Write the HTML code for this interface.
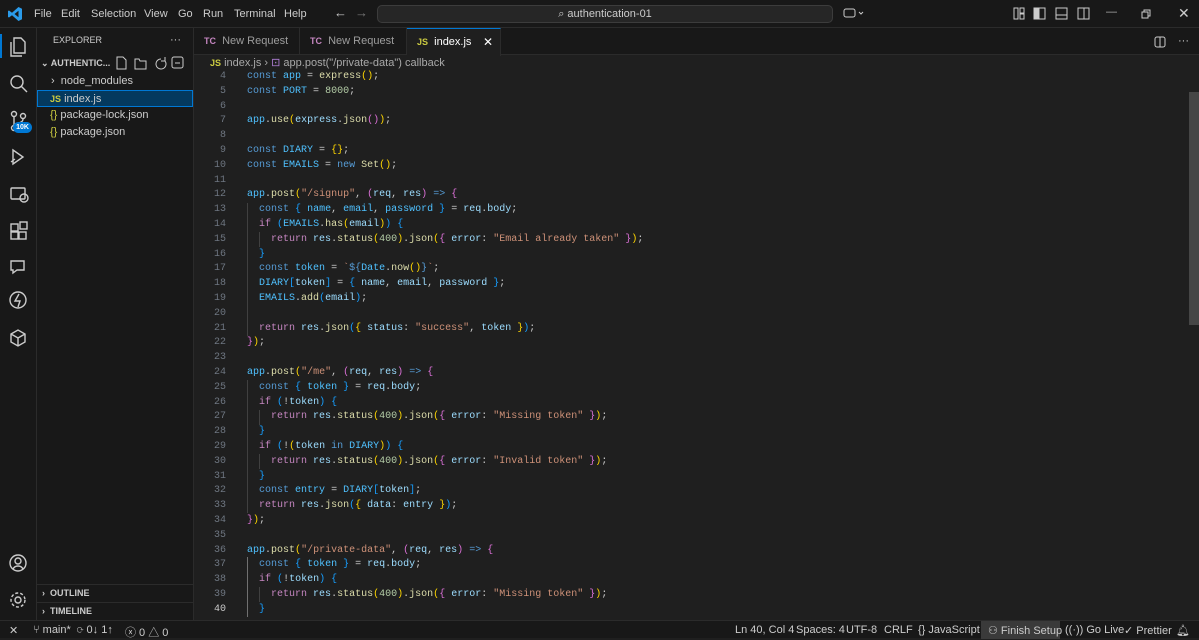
<!DOCTYPE html>
<html><head><meta charset="utf-8"><style>
*{margin:0;padding:0;box-sizing:border-box}
body{width:1199px;height:638px;background:#1f1f1f;font-family:"Liberation Sans",sans-serif;color:#ccc;position:relative;overflow:hidden;font-size:11px}
.abs{position:absolute}
#title{left:0;top:0;width:1199px;height:28px;background:#181818;border-bottom:1px solid #2b2b2b}
#title .m{top:8px;font-size:11px;color:#ccc}
#search{left:377px;top:5px;width:456px;height:18px;background:#262626;border:1px solid #3c3c3c;border-radius:5px;text-align:center;font-size:11px;color:#ccc;line-height:16px}
#act{left:0;top:28px;width:37px;height:592px;background:#181818;border-right:1px solid #2b2b2b}
#side{left:37px;top:28px;width:157px;height:592px;background:#181818;border-right:1px solid #2b2b2b}
#side .r{position:absolute;left:0;width:156px;height:17px;line-height:17px;font-size:11px;color:#ccc}
#tabs{left:194px;top:28px;width:1005px;height:27px;background:#181818;border-bottom:1px solid #2b2b2b}
.tab{position:absolute;top:0;height:27px;line-height:27px;font-size:11px;color:#9d9d9d;border-right:1px solid #2b2b2b;padding-left:10px}
#bc{left:194px;top:55px;height:16px;font-size:11px;color:#a9a9a9;line-height:16px}
#code{left:194px;top:70px;width:1000px;font-family:"Liberation Mono",monospace;font-size:10px}
.l{height:14.8px;line-height:14.8px;white-space:pre;position:relative}
.ln{position:absolute;left:0;width:32px;text-align:right;color:#6e7681}
.ln.cur{color:#ccc}
.t{position:absolute;left:53px;color:#ccc}
.k{color:#569cd6}.v{color:#9cdcfe}.f{color:#dcdcaa}.s{color:#ce9178}.n{color:#b5cea8}.c{color:#4fc1ff}.y{color:#ffd700}.p{color:#da70d6}.b{color:#179fff}.r2{color:#c586c0}
#status{left:0;top:620px;width:1199px;height:18px;background:#181818;border-top:1px solid #2b2b2b;font-size:11px;color:#ccc}
#status span{position:absolute;top:3px}
.js{color:#cbcb41;font-weight:bold;font-size:9px}
.tc{color:#c586c0;font-weight:bold;font-size:9px}
.g{position:absolute;width:1px;background:#404040}
</style></head><body>
<div id="title" class="abs">
<svg class="abs" style="left:7px;top:6px" width="16" height="16" viewBox="0 0 16 16"><path d="M11.5 1 L15 2.7 V13.3 L11.5 15 L5 9.2 L2 11.5 L1 11 V5 L2 4.5 L5 6.8 Z M11.5 4.8 L7.5 8 L11.5 11.2 Z" fill="#2a9bea"/></svg>
<span class="abs m" style="left:34px">File</span><span class="abs m" style="left:61px">Edit</span><span class="abs m" style="left:91px">Selection</span><span class="abs m" style="left:144px">View</span><span class="abs m" style="left:178px">Go</span><span class="abs m" style="left:203px">Run</span><span class="abs m" style="left:234px">Terminal</span><span class="abs m" style="left:284px">Help</span>
<span class="abs m" style="left:334px;top:5px;font-size:13px">←</span><span class="abs m" style="left:355px;top:5px;font-size:13px;color:#777">→</span>
<div id="search" class="abs">⌕ authentication-01</div>
<svg class="abs" style="left:843px;top:7px" width="22" height="14"><rect x="1" y="2" width="11" height="8" rx="2" fill="none" stroke="#ccc"/><path d="M16 5l2 2 2-2" stroke="#ccc" fill="none"/></svg>
<svg class="abs" style="left:1013px;top:7px" width="85" height="14" fill="none" stroke="#ccc"><rect x="1" y="1" width="4" height="11"/><rect x="7" y="1" width="4" height="5"/><rect x="7" y="7" width="4" height="5"/><rect x="21" y="1" width="11" height="11"/><rect x="21" y="1" width="5" height="11" fill="#ccc"/><rect x="43" y="1" width="11" height="11"/><line x1="43" y1="8" x2="54" y2="8"/><rect x="65" y="1" width="11" height="11"/><line x1="71" y1="1" x2="71" y2="12"/></svg>
<span class="abs m" style="left:1106px;top:6px;color:#aaa">—</span>
<svg class="abs" style="left:1141px;top:9px" width="10" height="10" fill="none" stroke="#ccc"><rect x="1" y="3" width="6" height="6"/><path d="M3 3V1h6v6H7"/></svg>
<span class="abs m" style="left:1178px;top:5px;font-size:14px">✕</span>
</div>
<div id="act" class="abs">
<div class="abs" style="left:0;top:6px;width:2px;height:24px;background:#0078d4"></div>
<svg class="abs" style="left:8px;top:8px" width="22" height="330" fill="none" stroke="#ccc" stroke-width="1.4">
<path d="M6 2h7l4 4v11H6z M3 6v14h11"/>
<circle cx="9" cy="46" r="6"/><path d="M13 50l6 6"/>
<circle cx="6" cy="78" r="2.5"/><circle cx="6" cy="92" r="2.5"/><circle cx="15" cy="80" r="2.5"/><path d="M6 81v8M15 83c0 5-9 4-9 6"/>
<path d="M5 114l10 7-10 7z M3 126l4-3"/>
<rect x="3" y="152" width="14" height="11" rx="1"/><circle cx="16" cy="162" r="4"/>
<rect x="3" y="188" width="7" height="7"/><rect x="3" y="196" width="7" height="7"/><rect x="11" y="196" width="7" height="7"/><rect x="12" y="186" width="7" height="7"/>
<path d="M3 225h13v9H9l-4 3v-3H3z"/>
<circle cx="10" cy="264" r="8"/><path d="M11 258l-4 7h5l-2 6"/>
<path d="M3 298l7-4 7 4v8l-7 4-7-4z M3 298l7 4 7-4 M10 302v8"/>
</svg>
<div class="abs" style="left:13px;top:94px;width:19px;height:11px;border-radius:6px;background:#0078d4;color:#fff;font-size:7px;font-weight:bold;text-align:center;line-height:11px">10K</div>
<svg class="abs" style="left:8px;top:525px" width="22" height="60" fill="none" stroke="#ccc" stroke-width="1.4"><circle cx="10" cy="10" r="8"/><circle cx="10" cy="8" r="3"/><path d="M5 16c2-4 8-4 10 0"/><circle cx="10" cy="47" r="3"/><circle cx="10" cy="47" r="7" stroke-dasharray="3 2"/></svg>
</div>
<div id="side" class="abs">
<div class="r" style="top:4px;left:16px;font-size:9px">EXPLORER</div><div class="r" style="top:4px;left:133px;width:20px">···</div>
<div class="r" style="top:27px;left:4px;font-size:9px;font-weight:bold">⌄ AUTHENTIC...</div>
<svg class="abs" style="left:78px;top:28px" width="70" height="14" fill="none" stroke="#ccc"><path d="M2 1h6l3 3v9H2z"/><path d="M20 3h4l1 2h6v8H20z"/><path d="M46 3a5 5 0 1 0 4 2M50 1v4h-4"/><rect x="57" y="1" width="11" height="11" rx="2"/><line x1="60" y1="7" x2="65" y2="7"/></svg>
<div class="r" style="top:45px;left:14px">›&nbsp; node_modules</div>
<div class="r" style="top:62px;background:#04395e;border:1px solid #0078d4;padding-left:12px"><span class="js">JS</span> index.js</div>
<div class="r" style="top:79px;left:13px"><span style="color:#cbcb41">{}</span> package-lock.json</div>
<div class="r" style="top:96px;left:13px"><span style="color:#cbcb41">{}</span> package.json</div>
<div class="abs" style="left:0;top:556px;width:156px;border-top:1px solid #2b2b2b"></div>
<div class="r" style="top:557px;left:5px;font-size:9px;font-weight:bold">›&nbsp; OUTLINE</div>
<div class="abs" style="left:0;top:574px;width:156px;border-top:1px solid #2b2b2b"></div>
<div class="r" style="top:575px;left:5px;font-size:9px;font-weight:bold">›&nbsp; TIMELINE</div>
</div>
<div id="tabs" class="abs">
<div class="tab" style="left:0;width:106px"><span class="tc">TC</span>&nbsp; New Request</div>
<div class="tab" style="left:106px;width:107px"><span class="tc">TC</span>&nbsp; New Request</div>
<div class="tab" style="left:213px;width:94px;background:#1f1f1f;color:#fff;border-top:1px solid #0078d4;height:28px"><span class="js">JS</span>&nbsp; index.js <span style="position:absolute;left:76px;font-size:12px">✕</span></div>
<svg class="abs" style="left:960px;top:8px" width="12" height="12" fill="none" stroke="#ccc"><rect x="1" y="1" width="10" height="10" rx="2"/><line x1="6" y1="1" x2="6" y2="11"/></svg>
<span class="abs" style="left:984px;top:7px">···</span>
</div>
<div id="bc" class="abs" style="left:210px"><span class="js">JS</span> index.js › <span style="color:#b180d7">⊡</span> app.post("/private-data") callback</div>
<div class="g" style="left:247px;top:203px;height:133px"></div>
<div class="g" style="left:259px;top:232px;height:15px"></div>
<div class="g" style="left:247px;top:380px;height:133px"></div>
<div class="g" style="left:259px;top:410px;height:15px"></div>
<div class="g" style="left:259px;top:454px;height:15px"></div>
<div class="g" style="left:247px;top:557px;height:60px;background:#707070"></div>
<div class="g" style="left:259px;top:587px;height:15px"></div>
<div id="code" class="abs">
<div class="l"><span class="ln">4</span><span class="t"><span class="k">const</span> <span class="c">app</span> = <span class="f">express</span><span class="y">()</span>;</span></div>
<div class="l"><span class="ln">5</span><span class="t"><span class="k">const</span> <span class="c">PORT</span> = <span class="n">8000</span>;</span></div>
<div class="l"><span class="ln">6</span></div>
<div class="l"><span class="ln">7</span><span class="t"><span class="c">app</span>.<span class="f">use</span><span class="y">(</span><span class="v">express</span>.<span class="f">json</span><span class="p">()</span><span class="y">)</span>;</span></div>
<div class="l"><span class="ln">8</span></div>
<div class="l"><span class="ln">9</span><span class="t"><span class="k">const</span> <span class="c">DIARY</span> = <span class="y">{}</span>;</span></div>
<div class="l"><span class="ln">10</span><span class="t"><span class="k">const</span> <span class="c">EMAILS</span> = <span class="k">new</span> <span class="f">Set</span><span class="y">()</span>;</span></div>
<div class="l"><span class="ln">11</span></div>
<div class="l"><span class="ln">12</span><span class="t"><span class="c">app</span>.<span class="f">post</span><span class="y">(</span><span class="s">"/signup"</span>, <span class="p">(</span><span class="v">req</span>, <span class="v">res</span><span class="p">)</span> <span class="k">=&gt;</span> <span class="p">{</span></span></div>
<div class="l"><span class="ln">13</span><span class="t">  <span class="k">const</span> <span class="b">{</span> <span class="c">name</span>, <span class="c">email</span>, <span class="c">password</span> <span class="b">}</span> = <span class="v">req</span>.<span class="v">body</span>;</span></div>
<div class="l"><span class="ln">14</span><span class="t">  <span class="r2">if</span> <span class="b">(</span><span class="c">EMAILS</span>.<span class="f">has</span><span class="y">(</span><span class="v">email</span><span class="y">)</span><span class="b">)</span> <span class="b">{</span></span></div>
<div class="l"><span class="ln">15</span><span class="t">    <span class="r2">return</span> <span class="v">res</span>.<span class="f">status</span><span class="y">(</span><span class="n">400</span><span class="y">)</span>.<span class="f">json</span><span class="y">(</span><span class="p">{</span> <span class="v">error</span>: <span class="s">"Email already taken"</span> <span class="p">}</span><span class="y">)</span>;</span></div>
<div class="l"><span class="ln">16</span><span class="t">  <span class="b">}</span></span></div>
<div class="l"><span class="ln">17</span><span class="t">  <span class="k">const</span> <span class="c">token</span> = <span class="s">`</span><span class="k">${</span><span class="c">Date</span>.<span class="f">now</span><span class="y">()</span><span class="k">}</span><span class="s">`</span>;</span></div>
<div class="l"><span class="ln">18</span><span class="t">  <span class="c">DIARY</span><span class="b">[</span><span class="v">token</span><span class="b">]</span> = <span class="b">{</span> <span class="v">name</span>, <span class="v">email</span>, <span class="v">password</span> <span class="b">}</span>;</span></div>
<div class="l"><span class="ln">19</span><span class="t">  <span class="c">EMAILS</span>.<span class="f">add</span><span class="b">(</span><span class="v">email</span><span class="b">)</span>;</span></div>
<div class="l"><span class="ln">20</span></div>
<div class="l"><span class="ln">21</span><span class="t">  <span class="r2">return</span> <span class="v">res</span>.<span class="f">json</span><span class="b">(</span><span class="y">{</span> <span class="v">status</span>: <span class="s">"success"</span>, <span class="v">token</span> <span class="y">}</span><span class="b">)</span>;</span></div>
<div class="l"><span class="ln">22</span><span class="t"><span class="p">}</span><span class="y">)</span>;</span></div>
<div class="l"><span class="ln">23</span></div>
<div class="l"><span class="ln">24</span><span class="t"><span class="c">app</span>.<span class="f">post</span><span class="y">(</span><span class="s">"/me"</span>, <span class="p">(</span><span class="v">req</span>, <span class="v">res</span><span class="p">)</span> <span class="k">=&gt;</span> <span class="p">{</span></span></div>
<div class="l"><span class="ln">25</span><span class="t">  <span class="k">const</span> <span class="b">{</span> <span class="c">token</span> <span class="b">}</span> = <span class="v">req</span>.<span class="v">body</span>;</span></div>
<div class="l"><span class="ln">26</span><span class="t">  <span class="r2">if</span> <span class="b">(</span>!<span class="v">token</span><span class="b">)</span> <span class="b">{</span></span></div>
<div class="l"><span class="ln">27</span><span class="t">    <span class="r2">return</span> <span class="v">res</span>.<span class="f">status</span><span class="y">(</span><span class="n">400</span><span class="y">)</span>.<span class="f">json</span><span class="y">(</span><span class="p">{</span> <span class="v">error</span>: <span class="s">"Missing token"</span> <span class="p">}</span><span class="y">)</span>;</span></div>
<div class="l"><span class="ln">28</span><span class="t">  <span class="b">}</span></span></div>
<div class="l"><span class="ln">29</span><span class="t">  <span class="r2">if</span> <span class="b">(</span>!<span class="y">(</span><span class="v">token</span> <span class="k">in</span> <span class="c">DIARY</span><span class="y">)</span><span class="b">)</span> <span class="b">{</span></span></div>
<div class="l"><span class="ln">30</span><span class="t">    <span class="r2">return</span> <span class="v">res</span>.<span class="f">status</span><span class="y">(</span><span class="n">400</span><span class="y">)</span>.<span class="f">json</span><span class="y">(</span><span class="p">{</span> <span class="v">error</span>: <span class="s">"Invalid token"</span> <span class="p">}</span><span class="y">)</span>;</span></div>
<div class="l"><span class="ln">31</span><span class="t">  <span class="b">}</span></span></div>
<div class="l"><span class="ln">32</span><span class="t">  <span class="k">const</span> <span class="c">entry</span> = <span class="c">DIARY</span><span class="b">[</span><span class="v">token</span><span class="b">]</span>;</span></div>
<div class="l"><span class="ln">33</span><span class="t">  <span class="r2">return</span> <span class="v">res</span>.<span class="f">json</span><span class="b">(</span><span class="y">{</span> <span class="v">data</span>: <span class="v">entry</span> <span class="y">}</span><span class="b">)</span>;</span></div>
<div class="l"><span class="ln">34</span><span class="t"><span class="p">}</span><span class="y">)</span>;</span></div>
<div class="l"><span class="ln">35</span></div>
<div class="l"><span class="ln">36</span><span class="t"><span class="c">app</span>.<span class="f">post</span><span class="y">(</span><span class="s">"/private-data"</span>, <span class="p">(</span><span class="v">req</span>, <span class="v">res</span><span class="p">)</span> <span class="k">=&gt;</span> <span class="p">{</span></span></div>
<div class="l"><span class="ln">37</span><span class="t">  <span class="k">const</span> <span class="b">{</span> <span class="c">token</span> <span class="b">}</span> = <span class="v">req</span>.<span class="v">body</span>;</span></div>
<div class="l"><span class="ln">38</span><span class="t">  <span class="r2">if</span> <span class="b">(</span>!<span class="v">token</span><span class="b">)</span> <span class="b">{</span></span></div>
<div class="l"><span class="ln">39</span><span class="t">    <span class="r2">return</span> <span class="v">res</span>.<span class="f">status</span><span class="y">(</span><span class="n">400</span><span class="y">)</span>.<span class="f">json</span><span class="y">(</span><span class="p">{</span> <span class="v">error</span>: <span class="s">"Missing token"</span> <span class="p">}</span><span class="y">)</span>;</span></div>
<div class="l"><span class="ln cur">40</span><span class="t">  <span class="b">}</span></span></div>
</div>
<div class="abs" style="left:1189px;top:92px;width:10px;height:233px;background:#464646"></div>
<div id="status" class="abs">
<span style="left:9px">✕</span>
<span style="left:33px">⑂ main*&nbsp; ⟳ 0↓ 1↑</span>
<span style="left:125px">ⓧ 0 △ 0</span>
<span style="left:735px">Ln 40, Col 4</span>
<span style="left:796px">Spaces: 4</span>
<span style="left:846px">UTF-8</span>
<span style="left:884px">CRLF</span>
<span style="left:918px">{} JavaScript</span>
<div class="abs" style="left:981px;top:0;width:79px;height:18px;background:#3a3a3a"></div>
<span style="left:988px">⚇ Finish Setup</span>
<span style="left:1065px">((·)) Go Live</span>
<span style="left:1124px">✓ Prettier</span>
<span style="left:1176px">🔔︎</span>
</div>
</body></html>
